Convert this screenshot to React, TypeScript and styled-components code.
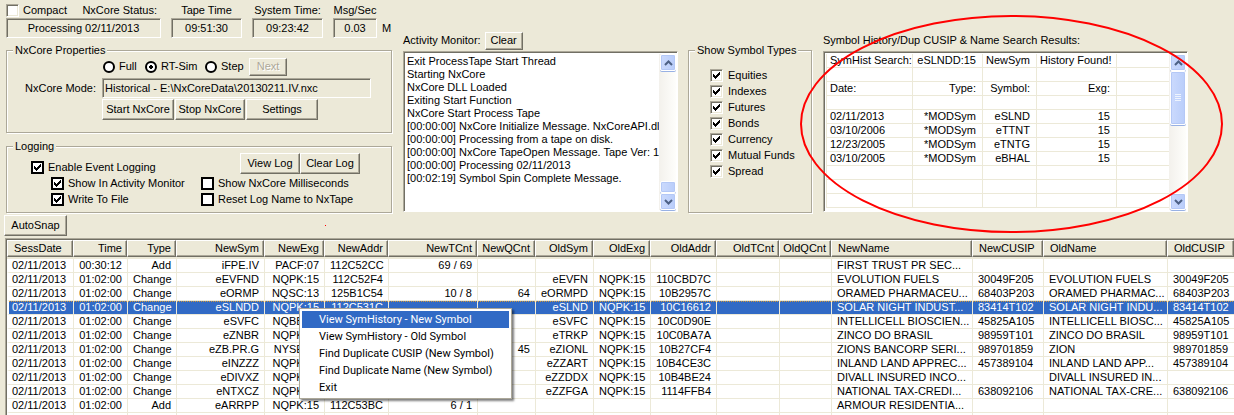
import React from "react";
import styled, { createGlobalStyle, css } from "styled-components";

const FACE = "#ece9d8";
const SHADOW = "#aca899";
const DARK = "#716f64";
const SELECT = "#316ac5";

const GlobalStyle = createGlobalStyle`
  *, *::before, *::after { box-sizing: border-box; }
  body {
    margin: 0;
    background: ${FACE};
    color: #000;
    font: 11px/13px "Liberation Sans", Arial, sans-serif;
  }
  button, input { font: inherit; color: inherit; margin: 0; }
`;

const sunken = css`
  border: 1px solid;
  border-color: ${SHADOW} #fff #fff ${SHADOW};
  box-shadow: inset 1px 1px 0 ${DARK};
`;

const Window = styled.main`
  position: relative;
  display: flex;
  flex-direction: column;
  height: 100vh;
  overflow: hidden;
  white-space: nowrap;
`;

const TopArea = styled.div`
  display: flex;
  align-items: stretch;
  gap: 10px;
  padding: 4px 46px 0 6px;
`;

const LeftColumn = styled.div`
  flex: 0 0 387px;
  display: flex;
  flex-direction: column;
`;

const StatusRow = styled.div`
  display: flex;
  align-items: flex-end;
  gap: 10px;
`;

const StatusField = styled.div<{ $width: number }>`
  width: ${(p) => p.$width}px;
  display: flex;
  flex-direction: column;
  align-items: center;
`;

const StatusHead = styled.div`
  align-self: stretch;
  display: flex;
  justify-content: space-between;
  padding-right: 4px;
`;

const Readout = styled.output`
  ${sunken}
  align-self: stretch;
  height: 20px;
  margin-top: 1px;
  line-height: 18px;
  text-align: center;
`;

const Unit = styled.span`
  margin-left: -5px;
  padding-bottom: 3px;
`;

const Group = styled.fieldset<{ $top: number; $height: number }>`
  min-width: 0;
  height: ${(p) => p.$height}px;
  margin: ${(p) => p.$top}px 1px 0 0;
  padding: 0;
  border: 1px solid ${SHADOW};
  box-shadow: 1px 1px 0 #fff, inset 1px 1px 0 #fff;
  > legend {
    margin-left: 6px;
    padding: 0 2px;
    height: 13px;
    background: ${FACE};
  }
`;

const Button = styled.button<{ $width: number; $height?: number }>`
  width: ${(p) => p.$width}px;
  height: ${(p) => p.$height ?? 21}px;
  padding: 0;
  border: 1px solid;
  border-color: #fff ${DARK} ${DARK} #fff;
  box-shadow: inset -1px -1px 0 ${SHADOW};
  background: ${FACE};
  line-height: 15px;
  &:disabled {
    color: ${SHADOW};
    text-shadow: 1px 1px 0 #fff;
  }
`;

const RadioRow = styled.div`
  display: flex;
  align-items: center;
  height: 19px;
  margin-left: 96px;
`;

const RadioLabel = styled.label<{ $width: number }>`
  display: flex;
  align-items: center;
  gap: 4px;
  width: ${(p) => p.$width}px;
`;

const Radio = styled.input`
  appearance: none;
  width: 12px;
  height: 12px;
  border: 2px solid #000;
  border-radius: 50%;
  background: #fff;
  &:checked {
    background: radial-gradient(circle, #000 0 2px, #fff 2px);
  }
`;

const ModeRow = styled.div`
  display: flex;
  align-items: center;
  justify-content: flex-end;
  gap: 6px;
  margin: 2px 20px 1px 0;
`;

const ModeInput = styled.input`
  ${sunken}
  width: 269px;
  height: 20px;
  padding: 0 2px;
  background: ${FACE};
  border-radius: 0;
  outline: 0;
`;

const ButtonRow = styled.div<{ $left: number }>`
  display: flex;
  gap: 1px;
  margin-left: ${(p) => p.$left}px;
`;

const LogGrid = styled.div`
  display: grid;
  grid-template-columns: 150px 1fr;
  padding-left: 44px;
  row-gap: 3px;
`;

const LogHead = styled.div`
  display: flex;
  align-items: flex-end;
  justify-content: space-between;
  height: 21px;
  padding: 0 31px 0 24px;
  margin-bottom: 3px;
`;

const LogButtons = styled.div`
  display: flex;
  align-self: flex-start;
`;

const CheckLabel = styled.label<{ $gap?: number }>`
  display: flex;
  align-items: center;
  gap: ${(p) => p.$gap ?? 4}px;
  height: 13px;
`;

const CheckBox = styled.span<{ $flat?: boolean }>`
  position: relative;
  display: block;
  width: 13px;
  height: 13px;
  input {
    appearance: none;
    display: block;
    width: 13px;
    height: 13px;
    background: #fff;
    ${(p) =>
      p.$flat
        ? css`border: 2px solid #000;`
        : css`
            border: 1px solid;
            border-color: ${SHADOW} #fff #fff ${SHADOW};
            box-shadow: inset 1px 1px 0 ${DARK}, inset -1px -1px 0 ${FACE};
          `}
  }
  svg {
    position: absolute;
    inset: 0;
    pointer-events: none;
  }
`;

const Toolbar = styled.div`
  display: flex;
  align-items: center;
  gap: 258px;
  padding: 2px 4px;
`;

const RedDot = styled.span`
  width: 1px;
  height: 1px;
  background: #f00;
`;

const ActivityColumn = styled.section`
  flex: 0 0 275px;
  min-width: 0;
  display: flex;
  flex-direction: column;
`;

const PanelHead = styled.div`
  display: flex;
  align-items: center;
  gap: 4px;
  height: 19px;
  margin: 27px 0 1px;
`;

const ListBox = styled.div`
  ${sunken}
  display: flex;
  height: 161px;
  padding: 2px 1px 1px 2px;
  background: #fff;
`;

const LogLines = styled.ol`
  flex: 1;
  min-width: 0;
  margin: 0;
  padding: 1px 0 0 1px;
  list-style: none;
  overflow: hidden;
`;

const TypesColumn = styled.div`
  flex: 0 0 125px;
  min-width: 0;
`;

const TypeList = styled.div`
  display: flex;
  flex-direction: column;
  gap: 3px;
  padding: 12px 0 0 21px;
`;

const HistoryColumn = styled.section`
  position: relative;
  flex: 1;
  min-width: 0;
`;

const Highlight = styled.svg`
  position: absolute;
  left: -23px;
  top: 11px;
  width: calc(100% + 58px);
  height: 218px;
  pointer-events: none;
`;

const HistoryTable = styled.table`
  width: 100%;
  table-layout: fixed;
  border-spacing: 0;
  td {
    height: 14px;
    padding: 0 6px 0 3px;
    line-height: 13px;
    text-align: right;
    border: solid ${FACE};
    border-width: 0 0 1px 1px;
  }
  td:first-child { text-align: left; padding-right: 0; }
`;

const TableClip = styled.div`
  flex: 1;
  min-width: 0;
  overflow: hidden;
`;

const ScrollTrack = styled.div`
  flex: 0 0 17px;
  display: flex;
  flex-direction: column;
  background: linear-gradient(90deg, #f3f1ec, #fefefb);
`;

const Spacer = styled.div`
  flex: 1;
`;

const ScrollPart = styled.button<{ $height: number }>`
  display: flex;
  align-items: center;
  justify-content: center;
  height: ${(p) => p.$height}px;
  width: 16px;
  margin: 0 0 0 1px;
  padding: 0;
  border: 1px solid #fff;
  border-radius: 2px;
  box-shadow: inset 0 0 0 1px #b4c8f6, 0 1px 0 #98b1e4;
  background: linear-gradient(90deg, #cbdafd, #b9cdfa);
`;

const GridBox = styled.div`
  flex: 1;
  min-height: 0;
  overflow: hidden;
  margin-left: 5px;
  border: solid ${SHADOW};
  border-width: 1px 0 0 1px;
  box-shadow: inset 1px 1px 0 ${DARK};
  padding: 1px 0 0 1px;
  background: #fff;
`;

const Grid = styled.table`
  width: 100%;
  table-layout: fixed;
  border-spacing: 0;
`;

const HeadCell = styled.th<{ $left?: boolean }>`
  height: 17px;
  padding: ${(p) => (p.$left ? "0 2px 1px 6px" : "0 4px 1px 0")};
  border: 1px solid;
  border-color: #fff ${DARK} ${DARK} #fff;
  box-shadow: inset -1px -1px 0 ${SHADOW};
  background: ${FACE};
  font-weight: normal;
  line-height: 13px;
  text-align: ${(p) => (p.$left ? "left" : "right")};
`;

const GapRow = styled.tr`
  td { height: 2px; padding: 0; background: ${FACE}; }
`;

const BodyRow = styled.tr<{ $selected?: boolean }>`
  td {
    height: 14px;
    padding: 0 5px;
    line-height: 13px;
    text-align: right;
    overflow: hidden;
    border: solid ${FACE};
    border-width: 0 0 1px 1px;
    ${(p) =>
      p.$selected &&
      css`
        color: #fff;
        background:
          repeating-linear-gradient(90deg, #ce953a 0 1px, ${SELECT} 1px 2px) top / 100% 1px no-repeat padding-box,
          linear-gradient(${SELECT}, ${SELECT}) padding-box;
      `}
  }
  td:first-child {
    padding-left: 3px;
    padding-right: 2px;
    text-align: left;
    border-left: 2px solid #fff;
  }
  td:nth-child(n + 14) { text-align: left; }
`;

const Menu = styled.ul`
  position: absolute;
  left: 299px;
  top: 308px;
  width: 213px;
  margin: 0;
  padding: 2px;
  list-style: none;
  background: #fff;
  border: 1px solid ${SHADOW};
  box-shadow: 2px 2px 2px rgba(0, 0, 0, 0.5);
  font-family: Roboto, Tahoma, sans-serif;
`;

const MenuItem = styled.button<{ $active?: boolean }>`
  display: block;
  width: 100%;
  height: 17px;
  padding: 0 17px;
  border: 0;
  text-align: left;
  color: ${(p) => (p.$active ? "#fff" : "#000")};
  background: ${(p) => (p.$active ? SELECT : "#fff")};
`;

function Check({ label, checked, flat, gap }: { label: string; checked?: boolean; flat?: boolean; gap?: number }) {
  return (
    <CheckLabel $gap={gap}>
      <CheckBox $flat={flat}>
        <input type="checkbox" defaultChecked={checked} />
        {checked && (
          <svg width="13" height="13" viewBox="0 0 13 13" shapeRendering="crispEdges">
            <path d="M3 5h1v1h1v1h1v-1h1v-1h1v-1h1v-1h1v3h-1v1h-1v1h-1v1h-1v1h-1v-1h-1v-1h-1z" />
          </svg>
        )}
      </CheckBox>
      {label}
    </CheckLabel>
  );
}

function Arrow({ down }: { down?: boolean }) {
  return (
    <svg width="9" height="6" viewBox="0 0 9 6">
      <path d={down ? "M1 1l3.500 3.500L8 1" : "M1 5l3.500-3.500L8 5"} fill="none" stroke="#4d6185" strokeWidth="2" />
    </svg>
  );
}

const logLines = [
  "Exit ProcessTape Start Thread",
  "Starting NxCore",
  "NxCore DLL Loaded",
  "Exiting Start Function",
  "NxCore Start Process Tape",
  "[00:00:00] NxCore Initialize Message. NxCoreAPI.dll V",
  "[00:00:00] Processing from a tape on disk.",
  "[00:00:00] NxCore TapeOpen Message. Tape Ver: 1.",
  "[00:00:00] Processing 02/11/2013",
  "[00:02:19] Symbol Spin Complete Message.",
];

const symbolTypes = ["Equities", "Indexes", "Futures", "Bonds", "Currency", "Mutual Funds", "Spread"];

const history = [
  ["SymHist Search:", "eSLNDD:15", "NewSym", "History Found!", ""],
  ["", "", "", "", ""],
  ["Date:", "Type:", "Symbol:", "Exg:", ""],
  ["", "", "", "", ""],
  ["02/11/2013", "*MODSym", "eSLND", "15", ""],
  ["03/10/2006", "*MODSym", "eTTNT", "15", ""],
  ["12/23/2005", "*MODSym", "eTNTG", "15", ""],
  ["03/10/2005", "*MODSym", "eBHAL", "15", ""],
  ["", "", "", "", ""],
  ["", "", "", "", ""],
  ["", "", "", "", ""],
];

const columns: [string, number | undefined][] = [
  ["SessDate", 66], ["Time", 54], ["Type", 49], ["NewSym", 88], ["NewExg", 60], ["NewAddr", 64],
  ["NewTCnt", 89], ["NewQCnt", 58], ["OldSym", 58], ["OldExg", 57], ["OldAddr", 66], ["OldTCnt", 63],
  ["OldQCnt", 52], ["NewName", 141], ["NewCUSIP", 71], ["OldName", 124], ["OldCUSIP", undefined],
];

const D = "02/11/2013";
const T = "01:02:00";
const rows = [
  [D, "00:30:12", "Add", "iFPE.IV", "PACF:07", "112C52CC", "69 / 69", "", "", "", "", "", "", "FIRST TRUST PR SEC...", "", "", ""],
  [D, T, "Change", "eEVFND", "NQPK:15", "112C52F4", "", "", "eEVFN", "NQPK:15", "110CBD7C", "", "", "EVOLUTION FUELS", "30049F205", "EVOLUTION FUELS", "30049F205"],
  [D, T, "Change", "eORMP", "NQSC:13", "125B1C54", "10 / 8", "64", "eORMPD", "NQPK:15", "10B2957C", "", "", "ORAMED PHARMACEU...", "68403P203", "ORAMED PHARMAC...", "68403P203"],
  [D, T, "Change", "eSLNDD", "NQPK:15", "112C531C", "", "", "eSLND", "NQPK:15", "10C16612", "", "", "SOLAR NIGHT INDUST...", "83414T102", "SOLAR NIGHT INDU...", "83414T102"],
  [D, T, "Change", "eSVFC", "NQBB:15", "112C5344", "", "", "eSVFC", "NQPK:15", "10C0D90E", "", "", "INTELLICELL BIOSCIEN...", "45825A105", "INTELLICELL BIOSC...", "45825A105"],
  [D, T, "Change", "eZNBR", "NQPK:15", "", "", "", "eTRKP", "NQPK:15", "10C0BA7A", "", "", "ZINCO DO BRASIL", "98959T101", "ZINCO DO BRASIL", "98959T101"],
  [D, T, "Change", "eZB.PR.G", "NYSE:03", "", "", "45", "eZIONL", "NQPK:15", "10B27CF4", "", "", "ZIONS BANCORP SERI...", "989701859", "ZION", "989701859"],
  [D, T, "Change", "eINZZZ", "NQPK:15", "", "", "", "eZZART", "NQPK:15", "10B4CE3C", "", "", "INLAND LAND APPREC...", "457389104", "INLAND LAND APP...", "457389104"],
  [D, T, "Change", "eDIVXZ", "NQPK:15", "", "", "", "eZZDDX", "NQPK:15", "10B4BE24", "", "", "DIVALL INSURED INCO...", "", "DIVALL INSURED IN...", ""],
  [D, T, "Change", "eNTXCZ", "NQPK:15", "", "", "", "eZZFGA", "NQPK:15", "1114FFB4", "", "", "NATIONAL TAX-CREDI...", "638092106", "NATIONAL TAX-CRE...", "638092106"],
  [D, T, "Add", "eARRPP", "NQPK:15", "112C53BC", "6 / 1", "", "", "", "", "", "", "ARMOUR RESIDENTIA...", "", "", ""],
  [D, T, "Add", "eBLFSF", "NQPK:15", "112C53E4", "", "", "", "", "", "", "", "BLF CARGN ACT NOV...", "", "", ""],
];

const menuItems = [
  "View SymHistory - New Symbol",
  "View SymHistory - Old Symbol",
  "Find Duplicate CUSIP (New Symbol)",
  "Find Duplicate Name (New Symbol)",
  "Exit",
];

export default function App() {
  return (
    <Window>
      <GlobalStyle />
      <TopArea>
        <LeftColumn>
          <StatusRow>
            <StatusField $width={155}>
              <StatusHead>
                <Check label="Compact" />
                <span>NxCore Status:</span>
              </StatusHead>
              <Readout>Processing 02/11/2013</Readout>
            </StatusField>
            <StatusField $width={71}>
              Tape Time
              <Readout>09:51:30</Readout>
            </StatusField>
            <StatusField $width={71}>
              System Time:
              <Readout>09:23:42</Readout>
            </StatusField>
            <StatusField $width={44}>
              Msg/Sec
              <Readout>0.03</Readout>
            </StatusField>
            <Unit>M</Unit>
          </StatusRow>

          <Group $top={6} $height={89}>
            <legend>NxCore Properties</legend>
            <RadioRow>
              <RadioLabel $width={42}><Radio type="radio" name="mode" />Full</RadioLabel>
              <RadioLabel $width={60}><Radio type="radio" name="mode" defaultChecked />RT-Sim</RadioLabel>
              <RadioLabel $width={44}><Radio type="radio" name="mode" />Step</RadioLabel>
              <Button $width={38} $height={18} disabled>Next</Button>
            </RadioRow>
            <ModeRow>
              <label htmlFor="nxmode">NxCore Mode:</label>
              <ModeInput id="nxmode" readOnly value="Historical - E:\NxCoreData\20130211.IV.nxc" />
            </ModeRow>
            <ButtonRow $left={95}>
              <Button $width={72}>Start NxCore</Button>
              <Button $width={70}>Stop NxCore</Button>
              <Button $width={72}>Settings</Button>
            </ButtonRow>
          </Group>

          <Group $top={7} $height={73}>
            <legend>Logging</legend>
            <LogHead>
              <Check label="Enable Event Logging" checked flat />
              <LogButtons>
                <Button $width={60}>View Log</Button>
                <Button $width={60}>Clear Log</Button>
              </LogButtons>
            </LogHead>
            <LogGrid>
              <Check label="Show In Activity Monitor" checked flat />
              <Check label="Show NxCore Milliseconds" flat />
              <Check label="Write To File" checked flat />
              <Check label="Reset Log Name to NxTape" flat />
            </LogGrid>
          </Group>
        </LeftColumn>

        <ActivityColumn>
          <PanelHead>
            Activity Monitor:
            <Button $width={38} $height={18}>Clear</Button>
          </PanelHead>
          <ListBox>
            <LogLines>
              {logLines.map((line) => <li key={line}>{line}</li>)}
            </LogLines>
            <ScrollTrack>
              <ScrollPart $height={17} aria-label="Scroll up"><Arrow /></ScrollPart>
              <Spacer />
              <ScrollPart $height={12} aria-label="Scroll thumb" />
              <ScrollPart $height={17} aria-label="Scroll down"><Arrow down /></ScrollPart>
            </ScrollTrack>
          </ListBox>
        </ActivityColumn>

        <TypesColumn>
          <Group $top={40} $height={169}>
            <legend>Show Symbol Types</legend>
            <TypeList>
              {symbolTypes.map((t) => <Check key={t} label={t} checked gap={5} />)}
            </TypeList>
          </Group>
        </TypesColumn>

        <HistoryColumn>
          <PanelHead>Symbol History/Dup CUSIP &amp; Name Search Results:</PanelHead>
          <ListBox>
            <TableClip>
              <HistoryTable>
                <colgroup>
                  <col width={86} />
                  <col width={70} />
                  <col width={54} />
                  <col width={80} />
                  <col />
                </colgroup>
                <tbody>
                  {history.map((r, i) => (
                    <tr key={i}>{r.map((c, j) => <td key={j}>{c}</td>)}</tr>
                  ))}
                </tbody>
              </HistoryTable>
            </TableClip>
            <ScrollTrack>
              <ScrollPart $height={17} aria-label="Scroll up"><Arrow /></ScrollPart>
              <ScrollPart $height={54} aria-label="Scroll thumb">
                <svg width="6" height="8" viewBox="0 0 6 8" shapeRendering="crispEdges">
                  <path d="M0 0.500h6M0 2.500h6M0 4.500h6M0 6.500h6" stroke="#eef4fe" />
                </svg>
              </ScrollPart>
              <Spacer />
              <ScrollPart $height={17} aria-label="Scroll down"><Arrow down /></ScrollPart>
            </ScrollTrack>
          </ListBox>
          <Highlight viewBox="0 0 423 218" preserveAspectRatio="none">
            <ellipse cx="211.500" cy="109" rx="210.500" ry="108" fill="none" stroke="#f00" strokeWidth="2" />
          </Highlight>
        </HistoryColumn>
      </TopArea>

      <Toolbar>
        <Button $width={63}>AutoSnap</Button>
        <RedDot />
      </Toolbar>

      <GridBox>
        <Grid>
          <colgroup>
            {columns.map(([name, width]) => <col key={name} width={width} />)}
          </colgroup>
          <thead>
            <tr>
              {columns.map(([name], i) => (
                <HeadCell key={name} $left={i === 0 || i > 12}>{name}</HeadCell>
              ))}
            </tr>
          </thead>
          <tbody>
            <GapRow><td colSpan={17} /></GapRow>
            {rows.map((r, i) => (
              <BodyRow key={i} $selected={i === 3}>
                {r.map((c, j) => <td key={j}>{c}</td>)}
              </BodyRow>
            ))}
          </tbody>
        </Grid>
      </GridBox>

      <Menu>
        {menuItems.map((item, i) => (
          <li key={item}><MenuItem $active={i === 0}>{item}</MenuItem></li>
        ))}
      </Menu>
    </Window>
  );
}
